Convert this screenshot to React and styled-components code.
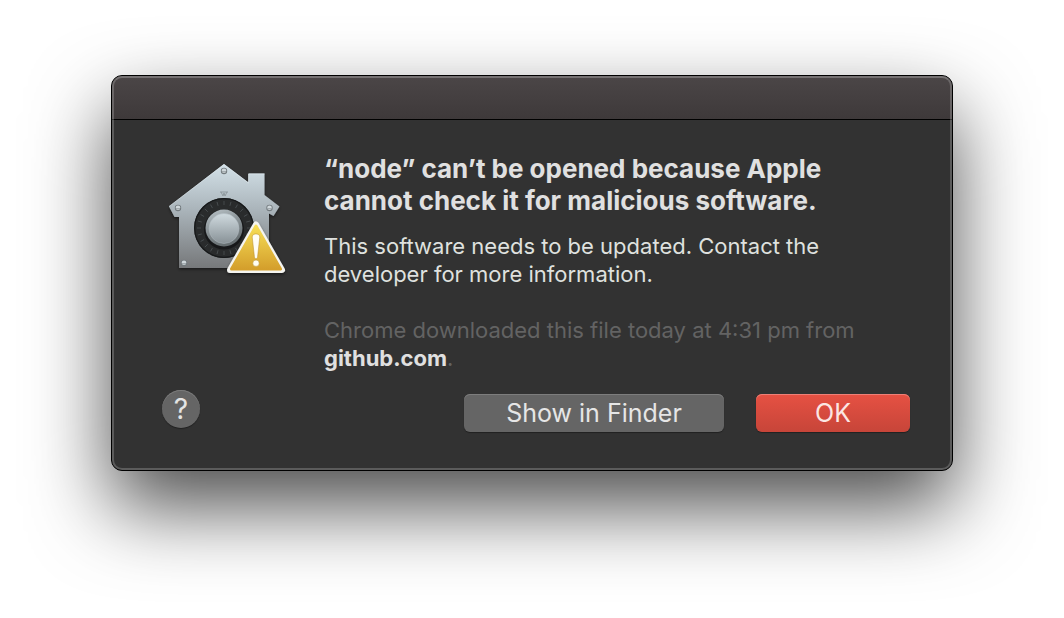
import React from "react";
import styled, { createGlobalStyle } from "styled-components";

const GlobalStyle = createGlobalStyle`
  *, *::before, *::after { box-sizing: border-box; }
  body {
    margin: 0;
    background: #fff;
    font-family: Inter, "Liberation Sans", sans-serif;
    -webkit-font-smoothing: antialiased;
  }
`;

const Page = styled.main`
  padding: 75px 111px 147px;
`;

const Dialog = styled.section`
  position: relative;
  border: 1px solid #000;
  border-radius: 11px;
  background: #323232;
  box-shadow: 0 36px 80px rgba(0, 0, 0, 0.7);

  &::after {
    content: "";
    position: absolute;
    inset: 0;
    border: 2px solid rgba(255, 255, 255, 0.2);
    border-top-color: rgba(255, 255, 255, 0.24);
    border-radius: 10px;
    pointer-events: none;
  }
`;

const TitleBar = styled.header`
  height: 44px;
  border-bottom: 1px solid #000;
  border-radius: 10px 10px 0 0;
  background: linear-gradient(#4b4647, #3e393a);
`;

const Content = styled.div`
  padding: 33px 42px 38px 50px;
`;

const Message = styled.div`
  display: flex;
`;

const IconSlot = styled.div`
  flex: none;
  width: 162px;
  padding: 6px 0 0 4px;

  svg { display: block; }
`;

const Copy = styled.div`
  flex: 1;
  min-width: 0;
  white-space: nowrap;
`;

const Heading = styled.h1`
  margin: 0 0 15px;
  color: #e0e0e0;
  font-size: 26px;
  line-height: 32px;
  font-weight: 700;
`;

const Paragraph = styled.p`
  margin: 0 0 28px;
  color: ${(p) => (p.$muted ? "#636363" : "#dfe1df")};
  font-size: 22px;
  line-height: 28px;

  &:last-child { margin-bottom: 0; }
`;

const Source = styled.strong`
  color: #e0e0e0;
  font-weight: 700;
`;

const Footer = styled.footer`
  display: flex;
  justify-content: space-between;
  height: 42px;
  margin-top: 18px;
`;

const HelpButton = styled.button`
  width: 38px;
  height: 38px;
  padding: 0;
  border: 0;
  border-radius: 50%;
  background: #656565;
  box-shadow: inset 0 1px 0 #7b7b7b, 0 1px 1px rgba(0, 0, 0, 0.35);
  color: #e4e4e4;
  font: 400 28px/38px Inter, sans-serif;
`;

const Actions = styled.div`
  display: flex;
  align-items: flex-end;
  gap: 32px;
`;

const PushButton = styled.button`
  width: ${(p) => (p.$primary ? 154 : 260)}px;
  height: 38px;
  padding: 0;
  border: 0;
  border-radius: 6px;
  background: ${(p) => (p.$primary ? "linear-gradient(#e65143, #c74539)" : "#656565")};
  box-shadow: inset 0 1px 0 ${(p) => (p.$primary ? "#ee8077" : "#7d7d7d")}, 0 1px 1px rgba(0, 0, 0, 0.35);
  color: ${(p) => (p.$primary ? "#fbe6e3" : "#e6e6e6")};
  font: 400 25px/38px Inter, sans-serif;
`;

const ticks = Array.from({ length: 24 }, (_, i) => i * 15);

function Bolt({ x, y }) {
  return (
    <g>
      <circle cx={x} cy={y} r="3.2" fill="#727a7e" />
      <circle cx={x} cy={y - 0.3} r="2.3" fill="#d0d8dc" />
      <path d={`M${x - 2} ${y + 0.7}h4`} stroke="#8a9296" strokeWidth="0.8" />
    </g>
  );
}

function GatekeeperIcon() {
  return (
    <svg width="124" height="118" viewBox="166 159 124 118" role="img" aria-label="Security warning">
      <defs>
        <linearGradient id="house" x1="0" y1="0" x2="0" y2="1">
          <stop offset="0" stopColor="#d3e1e8" />
          <stop offset="0.45" stopColor="#a9b3b9" />
          <stop offset="1" stopColor="#76787a" />
        </linearGradient>
        <linearGradient id="knob" x1="0" y1="0" x2="0" y2="1">
          <stop offset="0" stopColor="#d0dbe0" />
          <stop offset="1" stopColor="#889196" />
        </linearGradient>
        <linearGradient id="rim" x1="0" y1="0" x2="0.4" y2="1">
          <stop offset="0" stopColor="#bcc6cb" />
          <stop offset="0.5" stopColor="#8b9498" />
          <stop offset="1" stopColor="#666e71" />
        </linearGradient>
        <linearGradient id="warning" x1="0" y1="0" x2="0" y2="1">
          <stop offset="0" stopColor="#f6dd55" />
          <stop offset="1" stopColor="#d49f2c" />
        </linearGradient>
        <filter id="shade" x="-20%" y="-20%" width="140%" height="150%">
          <feDropShadow dx="0" dy="1.5" stdDeviation="1.5" floodOpacity="0.5" />
        </filter>
      </defs>
      <path
        d="M224 164L248.5 182.5V173.5H264.5V195L279.5 206.5L273.5 216L269 213.5V268H179V217H174.5L169 206.5Z"
        fill="url(#house)"
        filter="url(#shade)"
      />
      <path d="M169 206.5L224 164.5L248.5 183V174H264.5" fill="none" stroke="#dce6eb" strokeWidth="1" opacity="0.65" />
      <Bolt x={224} y={171} />
      <Bolt x={178} y={208} />
      <Bolt x={269.5} y={208} />
      <Bolt x={184} y={263} />
      <path d="M220 192H228M221 192L223 196L224 193L225 196L227 192" fill="none" stroke="#8b959a" strokeWidth="0.9" />
      <circle cx="224" cy="228" r="30" fill="#292b2c" />
      <circle cx="224" cy="228" r="29.3" fill="none" stroke="#17191a" strokeWidth="1.2" />
      {ticks.map((angle) => (
        <path
          key={angle}
          d="M224 201V205"
          stroke="#4b5154"
          strokeWidth="0.8"
          transform={`rotate(${angle} 224 228)`}
        />
      ))}
      <circle cx="224" cy="229.5" r="20" fill="#0f1112" opacity="0.7" />
      <circle cx="224" cy="228" r="18.5" fill="url(#rim)" />
      <circle cx="224" cy="228.5" r="15" fill="url(#knob)" stroke="#b1bbc0" strokeWidth="0.5" />
      <path
        d="M256 224.5L282 270H230Z"
        fill="#f4f4f0"
        stroke="#f4f4f0"
        strokeWidth="6"
        strokeLinejoin="round"
        filter="url(#shade)"
      />
      <path d="M256 226L280.5 269H231.5Z" fill="url(#warning)" stroke="url(#warning)" strokeWidth="3" strokeLinejoin="round" />
      <path d="M252.2 237C252.2 232.9 259.8 232.9 259.800 237L257.600 256.500C257.300 259.500 254.700 259.500 254.400 256.500Z" fill="#fffdf4" stroke="#b78c2d" strokeWidth="0.5" />
      <circle cx="256" cy="263.2" r="3.2" fill="#fffdf4" stroke="#b78c2d" strokeWidth="0.5" />
    </svg>
  );
}

export default function App() {
  return (
    <>
      <GlobalStyle />
      <Page>
        <Dialog role="alertdialog" aria-labelledby="alert-title" aria-describedby="alert-text">
          <TitleBar />
          <Content>
            <Message>
              <IconSlot>
                <GatekeeperIcon />
              </IconSlot>
              <Copy>
                <Heading id="alert-title">
                  “node” can’t be opened because Apple
                  <br />
                  cannot check it for malicious software.
                </Heading>
                <Paragraph id="alert-text">
                  This software needs to be updated. Contact the
                  <br />
                  developer for more information.
                </Paragraph>
                <Paragraph $muted>
                  Chrome downloaded this file today at 4:31 pm from
                  <br />
                  <Source>github.com</Source>.
                </Paragraph>
              </Copy>
            </Message>
            <Footer>
              <HelpButton type="button" aria-label="Help">?</HelpButton>
              <Actions>
                <PushButton type="button">Show in Finder</PushButton>
                <PushButton type="button" $primary>OK</PushButton>
              </Actions>
            </Footer>
          </Content>
        </Dialog>
      </Page>
    </>
  );
}
